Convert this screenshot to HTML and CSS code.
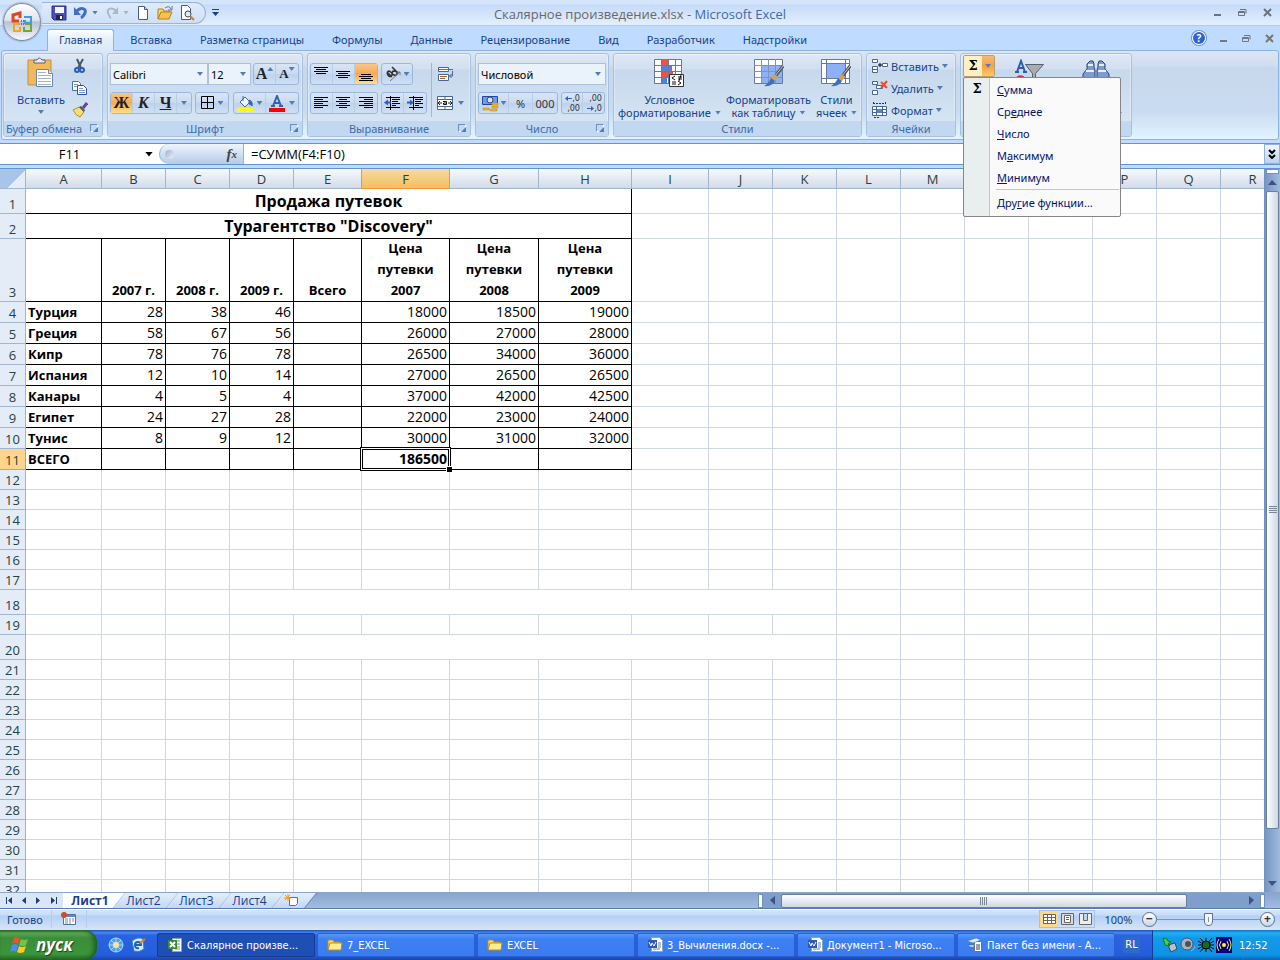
FILE: index.html
```html
<!DOCTYPE html>
<html lang="ru">
<head>
  <meta charset="UTF-8">
  <title>Скалярное произведение.xlsx - Microsoft Excel</title>
  <meta name="viewport" content="width=device-width, initial-scale=1.0">
  <link rel="stylesheet" href="styles.css">
</head>
<body>

  <button class="office" aria-label="Office">
    <svg width="24" height="24" viewBox="0 0 24 24" fill="none">
      <path d="M9 11H3V5l7-2v5" stroke="#e0481a" stroke-width="3"/>
      <path d="M14 7h7v6h-6v-3" stroke="#3f9bdb" stroke-width="2"/>
      <path d="M10 14H4v7h6v-4" stroke="#f3a51c" stroke-width="2"/>
      <path d="M15 14h6v7h-7v-4" stroke="#6fa832" stroke-width="2"/>
      <path d="M11 11h1M13 11h1M11 14h1M13 14h1" stroke="#c8581c" stroke-width="2"/>
    </svg>
  </button>

  <header class="titlebar">
    <div class="left">
      <div class="quick">
        <button aria-label="Сохранить"><svg width="16" height="16" viewBox="0 0 16 16"><path d="M1 1h14v14H3l-2-2z" fill="#4a4fc0" stroke="#2c2f8c"/><path d="M4 2h9v6H4z" fill="#f4f6ff"/><path d="M5 10h7v5H5z" fill="#22264f"/><path d="M9 11h2v3H9z" fill="#fff"/></svg></button>
        <button aria-label="Отменить"><svg width="16" height="16" viewBox="0 0 16 16"><path d="M4 6c3-4 10-3 8 2-1 2-2 4-4 5" fill="none" stroke="#3d6cc9" stroke-width="3"/><path d="M1 2v8h7z" fill="#3d6cc9"/></svg><i class="arr"></i></button>
        <button aria-label="Вернуть"><svg width="16" height="16" viewBox="0 0 16 16"><path d="M12 6C9 2 2 3 4 8c1 2 1 4 3 5" fill="none" stroke="#a9b8cc" stroke-width="2"/><path d="M14 2v7H8z" fill="#a9b8cc"/></svg><i class="arr grey"></i></button>
        <button aria-label="Создать"><svg width="16" height="16" viewBox="0 0 16 16"><path d="M3.500 1.500h6l3 3v10h-9z" fill="#fff" stroke="#4c5a74"/><path d="M9.500 1.500v3h3" fill="#d5deec" stroke="#4c5a74"/></svg></button>
        <button aria-label="Открыть"><svg width="16" height="16" viewBox="0 0 16 16"><path d="M1 14V4h5l1 2h6v3" fill="#f7d774" stroke="#b58016"/><path d="M1 14l3-7h11l-3 7z" fill="#fbc14c" stroke="#b58016"/><path d="M8 3q4-3 6 1m1-3v4h-4" fill="none" stroke="#5574a8"/></svg></button>
        <button aria-label="Просмотр"><svg width="16" height="16" viewBox="0 0 16 16"><path d="M2.500.5h6l3 3v11h-9z" fill="#fff" stroke="#4c5a74"/><circle cx="9" cy="9" r="3" fill="#d9ecfb" stroke="#446"/><path d="M11 11l4 4" stroke="#c98416" stroke-width="2"/></svg></button>
      </div>
      <button class="qmore" aria-label="Настройка панели"><i class="arr dark"></i></button>
    </div>
    <h1><span>Скалярное произведение.xlsx</span> - Microsoft Excel</h1>
    <div class="winbtns">
      <button aria-label="Свернуть"><svg width="9" height="9"><path d="M1 7h7" stroke="#69727f" stroke-width="2"/></svg></button>
      <button aria-label="Восстановить"><svg width="9" height="9" fill="none" stroke="#69727f"><path d="M2 1.500h6v4M.5 3.500h6v4h-6zM.5 4.500h6"/></svg></button>
      <button aria-label="Закрыть"><svg width="9" height="9"><path d="M1 1l7 7M8 1l-7 7" stroke="#69727f" stroke-width="2"/></svg></button>
    </div>
  </header>

  <nav class="tabs">
    <a href="#" class="on">Главная</a>
    <a href="#">Вставка</a>
    <a href="#">Разметка страницы</a>
    <a href="#">Формулы</a>
    <a href="#">Данные</a>
    <a href="#">Рецензирование</a>
    <a href="#">Вид</a>
    <a href="#">Разработчик</a>
    <a href="#">Надстройки</a>
    <div class="winbtns">
      <button class="help" aria-label="Справка">?</button>
      <button aria-label="Свернуть книгу"><svg width="9" height="9"><path d="M1 7h7" stroke="#777" stroke-width="2"/></svg></button>
      <button aria-label="Восстановить книгу"><svg width="9" height="9" fill="none" stroke="#777"><path d="M2 1.500h6v4M.5 3.500h6v4h-6zM.5 4.500h6"/></svg></button>
      <button aria-label="Закрыть книгу"><svg width="9" height="9"><path d="M1 1l7 7M8 1l-7 7" stroke="#777" stroke-width="2"/></svg></button>
    </div>
  </nav>

  <section class="ribbon">
    <div class="group clip">
      <div class="gbody">
        <button class="big">
          <svg width="30" height="31" viewBox="0 0 30 31"><path d="M2 3h23v25H2z" fill="#f0b95c" stroke="#c98f35"/><path d="M8 6V3h3q2-4 5 0h3v3z" fill="#e9edf3" stroke="#596375"/><path d="M10.500 12.500h12l4 4v13h-16z" fill="#fff" stroke="#6f85ad"/><path d="M22.500 12.500v4h4" fill="#dbe5f4" stroke="#6f85ad"/><path d="M12 15.500h8M12 18.500h13M12 21.500h13M12 24.500h13M12 27.500h13" stroke="#9db2d4"/></svg>
          Вставить<i class="arr"></i>
        </button>
        <div class="stack">
          <button aria-label="Вырезать"><svg width="16" height="16" viewBox="0 0 16 16" fill="none"><path d="M5 1l4 9M11 1L6 10" stroke="#4c5564" stroke-width="2"/><circle cx="5" cy="12" r="2" stroke="#2b5cb8" stroke-width="2"/><circle cx="10" cy="12" r="2" stroke="#2b5cb8" stroke-width="2"/></svg></button>
          <button aria-label="Копировать"><svg width="16" height="16" viewBox="0 0 16 16"><path d="M.5 1.500h6l2 2v7h-8z" fill="#fff" stroke="#4d70ad"/><path d="M2 4.500h4M2 6.500h4" stroke="#7d9bd0"/><path d="M5.500 5.500h6l3 3v6h-9z" fill="#fff" stroke="#2b55a2"/><path d="M7 8.500h4M7 10.500h6M7 12.500h6" stroke="#7d9bd0"/></svg></button>
          <button aria-label="Формат по образцу"><svg width="16" height="16" viewBox="0 0 16 16"><path d="M1 8l6-3 5 5-4 5q-4-1-7-7z" fill="#f5dd7c" stroke="#b58c26"/><path d="M7 5l2-1 4 4-1 2z" fill="#555a66"/><path d="M11 6l4-5" stroke="#60499b" stroke-width="3"/></svg></button>
        </div>
      </div>
      <footer>Буфер обмена<i class="launch"></i></footer>
    </div>

    <div class="group font">
      <div class="gbody rows">
        <div class="line">
          <label class="combo"><select aria-label="Шрифт"><option>Calibri</option></select></label>
          <label class="combo size"><select aria-label="Размер"><option>12</option></select></label>
          <div class="set push">
            <button class="serif">A<i class="arr up"></i></button>
            <button class="serif small">A<i class="arr"></i></button>
          </div>
        </div>
        <div class="line">
          <div class="set">
            <button class="serif on">Ж</button>
            <button class="serif it">К</button>
            <button class="serif un">Ч</button>
            <button class="drop" aria-label="Подчеркивание"><i class="arr"></i></button>
          </div>
          <div class="set">
            <button class="wide" aria-label="Границы"><svg width="14" height="14" fill="none" stroke="#000"><path d="M.5.5h12v12H.5zM6.500.5v12M.5 6.500h12"/></svg><i class="arr"></i></button>
          </div>
          <div class="set push">
            <button class="wide" aria-label="Цвет заливки"><svg width="17" height="17" viewBox="0 0 17 17"><path d="M3 7l5-5 5 5-5 5z" fill="#f2f6fb" stroke="#4d6a96"/><path d="M6 1v5M12 5q4 1 3 6-2-2-3-2z" stroke="#3268b5" fill="#3268b5"/><path d="M0 13h16v4H0z" fill="#ff0"/></svg><i class="arr"></i></button>
            <button class="wide" aria-label="Цвет текста"><svg width="17" height="17" viewBox="0 0 17 17"><path d="M4 11L8 1l4 10M5 8h6M2 11h4M10 11h4" fill="none" stroke="#3a5fa6" stroke-width="2"/><path d="M0 13h16v4H0z" fill="red"/></svg><i class="arr"></i></button>
          </div>
        </div>
      </div>
      <footer>Шрифт<i class="launch"></i></footer>
    </div>

    <div class="group align">
      <div class="gbody split">
        <div class="rows">
          <div class="line">
            <div class="set">
              <button aria-label="По верхнему краю"><svg width="15" height="15" stroke="#000"><path d="M0 .5h14M2 2.500h10M0 4.500h14M2 6.500h10"/></svg></button>
              <button aria-label="По середине"><svg width="15" height="15" stroke="#000"><path d="M0 4.500h14M2 6.500h10M0 8.500h14M2 10.500h10"/></svg></button>
              <button class="on" aria-label="По нижнему краю"><svg width="15" height="15" stroke="#000"><path d="M2 7.500h10M0 9.500h14M2 11.500h10M0 13.500h14"/></svg></button>
            </div>
            <div class="set">
              <button class="wide" aria-label="Ориентация"><svg width="17" height="16" viewBox="0 0 17 16" fill="none" stroke="#333" stroke-width="1.500"><path d="M2 6l5 5M4 5q-3 1-1 4t4 0q1-2-3-4zM7 1l6 6M8 5q-2 3 1 4t3-2q0-2-4-2z"/><path d="M5 15L15 6M12 6h3v3" stroke="#777" stroke-width="1"/></svg><i class="arr"></i></button>
            </div>
          </div>
          <div class="line">
            <div class="set">
              <button aria-label="По левому краю"><svg width="15" height="13" stroke="#000"><path d="M0 .5h14M0 2.500h9M0 4.500h14M0 6.500h9M0 8.500h14M0 10.500h9"/></svg></button>
              <button aria-label="По центру"><svg width="15" height="13" stroke="#000"><path d="M0 .5h14M3 2.500h8M0 4.500h14M3 6.500h8M0 8.500h14M3 10.500h8"/></svg></button>
              <button aria-label="По правому краю"><svg width="15" height="13" stroke="#000"><path d="M0 .5h14M5 2.500h9M0 4.500h14M5 6.500h9M0 8.500h14M5 10.500h9"/></svg></button>
            </div>
            <div class="set">
              <button aria-label="Уменьшить отступ"><svg width="17" height="15" stroke="#000"><path d="M2 1.500h14M8 3.500h8M8 5.500h6M8 7.500h8M8 9.500h4M2 11.500h14M6.500 0v14"/><path d="M0 6.500l4-3v2h3v2H4v2z" fill="#2f5fc4" stroke="none"/></svg></button>
              <button aria-label="Увеличить отступ"><svg width="17" height="15" stroke="#000"><path d="M2 1.500h14M8 3.500h8M8 5.500h6M8 7.500h8M8 9.500h4M2 11.500h14M6.500 0v14"/><path d="M7 6.500l-4-3v2H0v2h3v2z" fill="#2f5fc4" stroke="none"/></svg></button>
            </div>
          </div>
        </div>
        <div class="rows merge">
          <button aria-label="Перенос текста"><svg width="17" height="17" viewBox="0 0 17 17"><path d="M1.500 1.500h10v4h-10zM1.500 8.500h10v6h-10z" fill="#fff" stroke="#4a6696"/><path d="M1 3.500h15M3 10.500h7M3 12.500h5" stroke="#a0602c"/><path d="M15.500 5v5h-3m2-2l-2 2 2 2" fill="none" stroke="#51637f"/></svg></button>
          <button aria-label="Объединить"><svg width="17" height="15" viewBox="0 0 17 15"><path d="M.5.5h15v13H.5zM.5 3.500h15M.5 10.500h15M8 0v3M8 11v3" fill="#fff" stroke="#4a6696"/><path d="M1 7h4M11 7h4M3 5L1 7l2 2M13 5l2 2-2 2" fill="none" stroke="#222"/><path d="M6 5.500h3.500v3H6.500V7H9" fill="none" stroke="#111"/></svg><i class="arr"></i></button>
        </div>
      </div>
      <footer>Выравнивание<i class="launch"></i></footer>
    </div>

    <div class="group number">
      <div class="gbody rows">
        <div class="line">
          <label class="combo full"><select aria-label="Числовой формат"><option>Числовой</option></select></label>
        </div>
        <div class="line">
          <div class="set">
            <button class="wide" aria-label="Денежный формат"><svg width="18" height="17" viewBox="0 0 18 17"><path d="M1.500 1.500h15v8h-15z" fill="#6f9be0" stroke="#24479a"/><circle cx="9" cy="5" r="3" fill="#cfe0fa" stroke="#24479a"/><path d="M11 8h6v2h-6zM11 11h6v2h-6zM9 14h7v2H9zM2 13h6v2H2z" fill="#f5b92e" stroke="#b77c10" stroke-width=".5"/></svg><i class="arr"></i></button>
            <button>%</button>
            <button>000</button>
          </div>
          <div class="set">
            <button class="dec"><span><svg width="7" height="5"><path d="M0 2.500L3 0v2h4v1H3v2z" fill="#2f5fc4"/></svg>,0</span><span>,00</span></button>
            <button class="dec"><span>,00</span><span><svg width="7" height="5"><path d="M7 2.500L4 0v2H0v1h4v2z" fill="#2f5fc4"/></svg>,0</span></button>
          </div>
        </div>
      </div>
      <footer>Число<i class="launch"></i></footer>
    </div>

    <div class="group styles">
      <div class="gbody bigs">
        <button class="big">
          <svg width="30" height="30" viewBox="0 0 30 30"><path d="M.5 1.500h27v24H.5z" fill="#fff" stroke="#68799a"/><path d="M7 1h7v6H7zM7 13h12v6H7z" fill="#f0533c"/><path d="M7 7h11v6H7zM7 19h6v6H7z" fill="#4d83e8"/><path d="M.5 7.500h27M.5 13.500h27M.5 19.500h27M7.500 1v24M14.500 1v24M21.500 1v24" stroke="#68799a"/><path d="M15.500 16.500h14v12h-14z" fill="#fff" stroke="#333"/><path d="M21 18l-3 2 3 2M18 24h4M18 26h4M24 19h4M24 21h4M27 17l-2 6M24 23l3 2-3 2" fill="none" stroke="#111"/></svg>
          Условное<span>форматирование<i class="arr"></i></span>
        </button>
        <button class="big">
          <svg width="30" height="30" viewBox="0 0 30 30"><path d="M.5 1.500h28v24H.5z" fill="#fff" stroke="#68799a"/><path d="M8 7h20v18H8z" fill="#8db1f7"/><path d="M.5 7.500h28M.5 13.500h28M.5 19.500h28M7.500 1v24M14.500 1v24M21.500 1v24" stroke="#8093b5"/><path d="M29 8l-9 12" stroke="#4b4f58" stroke-width="3"/><path d="M29 8l-8 10" stroke="#c9ccd2"/><path d="M21 16l-4 4 4 3 3-4z" fill="#d6a34a"/><path d="M17 20l4 3q-3 6-11 5 5-3 7-8z" fill="#3e6fbe"/></svg>
          Форматировать<span>как таблицу<i class="arr"></i></span>
        </button>
        <button class="big">
          <svg width="30" height="30" viewBox="0 0 30 30"><path d="M.5 1.500h28v24H.5z" fill="#fff" stroke="#68799a"/><path d="M.5 5.500h28M.5 20.500h28M5.500 1v24M24.500 1v24" stroke="#68799a"/><path d="M6 6h18v14H6z" fill="#8db1f7"/><path d="M29 8l-9 12" stroke="#4b4f58" stroke-width="3"/><path d="M29 8l-8 10" stroke="#c9ccd2"/><path d="M21 16l-4 4 4 3 3-4z" fill="#d6a34a"/><path d="M17 20l4 3q-3 6-11 5 5-3 7-8z" fill="#3e6fbe"/></svg>
          Стили<span>ячеек<i class="arr"></i></span>
        </button>
      </div>
      <footer>Стили</footer>
    </div>

    <div class="group cells">
      <div class="gbody list">
        <button><svg width="16" height="16" viewBox="0 0 16 16"><path d="M.5 1.500h5v3h-5zM.5 8.500h5v6h-5zM.5 11.500h5M10.500 5.500h5v3h-5z" fill="#fff" stroke="#4a6696"/><path d="M6 7h4M8 5v4" stroke="#000"/></svg>Вставить<i class="arr"></i></button>
        <button><svg width="16" height="16" viewBox="0 0 16 16"><path d="M.5 1.500h5v3h-5zM.5 10.500h5v4h-5zM4.500 5.500h6v3h-6z" fill="#fff" stroke="#4a6696"/><path d="M9 2l6 6M15 1L9 8" stroke="#f04a28" stroke-width="2"/></svg>Удалить<i class="arr"></i></button>
        <button><svg width="16" height="16" viewBox="0 0 16 16"><path d="M.5 4.500h14v9H.5zM.5 7.500h14M.5 10.500h14M4.500 4v9M10.500 4v9" fill="#fff" stroke="#4a6696"/><path d="M5 7h5v4H5z" fill="#4d83e8"/><path d="M1 1.500h13M1.500 0v3M13.500 0v3M2 15.500h6" stroke="#333" stroke-dasharray="2 1"/></svg>Формат<i class="arr"></i></button>
      </div>
      <footer>Ячейки</footer>
    </div>

    <div class="group edit">
      <div class="gbody">
        <div class="sum"><button>Σ</button><button aria-label="Список функций"><i class="arr"></i></button></div>
        <svg class="sort" width="29" height="30" viewBox="0 0 29 30"><path d="M2 13L6 2l4 11M3 9h6M0 13h4M8 13h4" fill="none" stroke="#2f5bb0" stroke-width="2"/><path d="M10.500 5.500h18l-8 9v12h-3v-12z" fill="#a9adb3" stroke="#5a5e66"/><path d="M2 19q2-3 6-1v9" fill="none" stroke="#c33" stroke-width="2"/></svg>
        <svg class="find" width="28" height="28" viewBox="0 0 28 28"><path d="M8 2h3l1 3v3l1 3v12H1v-8l4-5V5zM17 2h3l3 3v5l4 5v8H15V11l1-3V5z" fill="#7f9cd0" stroke="#2c4678"/><path d="M6 6h5M17 6h5M4 12h8M16 12h8" stroke="#e8f0fc" stroke-width="2"/></svg>
        <i class="arr"></i>
      </div>
      <footer></footer>
      <div class="menu" role="menu">
        <button role="menuitem"><b>Σ</b><span><u>С</u>умма</span></button>
        <button role="menuitem"><span>Ср<u>е</u>днее</span></button>
        <button role="menuitem"><span><u>Ч</u>исло</span></button>
        <button role="menuitem"><span>М<u>а</u>ксимум</span></button>
        <button role="menuitem"><span><u>М</u>инимум</span></button>
        <button role="menuitem" class="more"><span>Дру<u>г</u>ие функции...</span></button>
      </div>
    </div>
  </section>

  <div class="formula">
    <div class="namebox"><input aria-label="Имя ячейки" value="F11"><i class="arr black"></i></div>
    <div class="fx"><i class="knob"></i><button aria-label="Вставить функцию"><em>f</em><sub>x</sub></button></div>
    <input class="expr" aria-label="Строка формул" value="=СУММ(F4:F10)">
    <button class="expand" aria-label="Развернуть"><svg width="9" height="10" fill="none" stroke="#000" stroke-width="2"><path d="M1 1l3 3 3-3M1 6l3 3 3-3"/></svg></button>
  </div>

  <main class="sheet">
    <div class="grid"><table id="grid"></table></div>
    <div class="vscroll">
      <i class="splitter"></i>
      <button aria-label="Вверх"><svg width="9" height="5"><path d="M0 5l4-5 5 5z" fill="#3d5378"/></svg></button>
      <div class="thumb"><svg width="8" height="8" stroke="#7a8799"><path d="M0 .5h8M0 2.500h8M0 4.500h8M0 6.500h8"/></svg></div>
      <button aria-label="Вниз"><svg width="9" height="5"><path d="M0 0h9L4 5z" fill="#3d5378"/></svg></button>
    </div>
  </main>

  <div class="bottom">
    <div class="nav">
      <button aria-label="Первый лист"><svg width="7" height="7"><path d="M0 0h1v7H0zM6 0v7L2 3.500z" fill="#1c3c7c"/></svg></button>
      <button aria-label="Предыдущий лист"><svg width="7" height="7"><path d="M5 0v7L1 3.500z" fill="#1c3c7c"/></svg></button>
      <button aria-label="Следующий лист"><svg width="7" height="7"><path d="M1 0v7l4-3.500z" fill="#1c3c7c"/></svg></button>
      <button aria-label="Последний лист"><svg width="7" height="7"><path d="M6 0h1v7H6zM1 0v7l4-3.500z" fill="#1c3c7c"/></svg></button>
    </div>
    <div class="sheets">
      <button class="on">Лист1</button>
      <button>Лист2</button>
      <button>Лист3</button>
      <button>Лист4</button>
      <button class="new" aria-label="Вставить лист"><svg width="16" height="13" viewBox="0 0 16 13"><path d="M5.500 3.500h8v6l-2 2h-6z" fill="#fff" stroke="#55709f"/><path d="M4 0v7M0 4h7M1 1l5 5M6 1L1 6" stroke="#e39a2d"/></svg></button>
    </div>
    <div class="hscroll">
      <i class="splitter"></i>
      <button aria-label="Влево"><svg width="5" height="9"><path d="M5 0v9L0 4z" fill="#3d5378"/></svg></button>
      <div class="thumb"><svg width="8" height="8" stroke="#7a8799"><path d="M.5 0v8M2.500 0v8M4.500 0v8M6.500 0v8"/></svg></div>
      <button aria-label="Вправо"><svg width="5" height="9"><path d="M0 0v9l5-5z" fill="#3d5378"/></svg></button>
      <i class="splitter"></i>
    </div>
  </div>

  <div class="status">
    <span>Готово</span>
    <button class="macro" aria-label="Запись макроса"><svg width="16" height="14" viewBox="0 0 16 14"><path d="M2.500 2.500h12v10h-12z" fill="#fff" stroke="#54709f"/><path d="M3 3h11v2H3z" fill="#5e86cf"/><path d="M4 7h3M8 7h2M11 7h2M4 9h3M8 9h2M11 9h2M4 11h3M8 11h2" stroke="#7288ab"/><circle cx="3" cy="3" r="3" fill="#d9482b"/></svg></button>
    <div class="views">
      <button class="on" aria-label="Обычный"><svg width="13" height="11" fill="#fff" stroke="#6c6550"><path d="M.5.5h12v9H.5zM.5 3.500h12M.5 6.500h12M4.500.5v9M8.500.5v9"/></svg></button>
      <button aria-label="Разметка"><svg width="13" height="12" fill="#ddd" stroke="#666"><path d="M.5.5h12v11H.5z"/><path d="M3.500 2.500h6v7h-6zM5 4.500h3M5 6.500h3" fill="#fff"/></svg></button>
      <button aria-label="Страничный"><svg width="13" height="12" fill="#eee" stroke="#666"><path d="M.5.5h12v11H.5zM4.500.5v7h4v-7"/></svg></button>
    </div>
    <span class="pct">100%</span>
    <button class="round" aria-label="Уменьшить">−</button>
    <input type="range" aria-label="Масштаб" min="0" max="100" value="50">
    <button class="round" aria-label="Увеличить">+</button>
  </div>

  <div class="taskbar">
    <button class="start"><svg width="20" height="18" viewBox="0 0 20 18"><path d="M4 2q3-2 6 0L8 8Q5 6 2 8z" fill="#e8532a"/><path d="M11 3q3 2 7 0l-2 6q-3 2-7 0z" fill="#7cc242"/><path d="M2 9q3-2 6 0l-2 7q-3-2-6 0z" fill="#4a8df0"/><path d="M9 10q3 2 7 0l-2 6q-4 2-7 0z" fill="#fbc829"/></svg>пуск</button>
    <div class="launchers">
      <a href="#" aria-label="Браузер"><svg width="16" height="16" viewBox="0 0 16 16"><circle cx="8" cy="8" r="7" fill="#4aa3ee" stroke="#9fd0fb"/><path d="M8 1v14M1 8h14M3 3l10 10M13 3L3 13" stroke="#fff" stroke-opacity=".5"/><circle cx="8" cy="8" r="3" fill="#ffe2a8"/></svg></a>
      <a href="#" aria-label="Почта"><svg width="16" height="16" viewBox="0 0 16 16"><path d="M1 4q6-5 11-2l1 10q-5 4-10 2z" fill="#d6eafc" stroke="#2b80cf"/><path d="M4 8h6q0-3-3-3T4 8q0 4 4 3" fill="none" stroke="#1a63b5" stroke-width="2"/><path d="M9 6l5-4" stroke="#e67a22" stroke-width="2"/></svg></a>
    </div>
    <div class="tasks">
      <button class="on"><svg width="16" height="16" viewBox="0 0 16 16"><path d="M5.500 1.500h9v13h-9z" fill="#fff" stroke="#8aa"/><path d="M8 4h5M8 7h5M8 10h5M8 12h5" stroke="#6aa564"/><path d="M1 3h9v9H1z" fill="#3a8a3c"/><path d="M3 5l5 5M8 5l-5 5" stroke="#fff" stroke-width="2"/></svg><span>Скалярное произве...</span></button>
      <button><svg width="16" height="16" viewBox="0 0 16 16"><path d="M1 13V3h5l1 2h6v3" fill="#f8da5c" stroke="#c08c14"/><path d="M1 13l2-7h12l-1 7z" fill="#ffec94" stroke="#c08c14"/></svg><span>7_EXCEL</span></button>
      <button><svg width="16" height="16" viewBox="0 0 16 16"><path d="M1 13V3h5l1 2h6v3" fill="#f8da5c" stroke="#c08c14"/><path d="M1 13l2-7h12l-1 7z" fill="#ffec94" stroke="#c08c14"/></svg><span>EXCEL</span></button>
      <button><svg width="16" height="16" viewBox="0 0 16 16"><path d="M4.500.5h8l3 3v11h-11z" fill="#fff" stroke="#8aa"/><path d="M6 12h7M11 6h3M11 8h3M11 10h3" stroke="#5b7fc4"/><path d="M1 3h9v8H1z" fill="#3059b0"/><path d="M2 5l2 4 1-3 2 3 2-4" fill="none" stroke="#fff"/></svg><span>3_Вычиления.docx -...</span></button>
      <button><svg width="16" height="16" viewBox="0 0 16 16"><path d="M4.500.5h8l3 3v11h-11z" fill="#fff" stroke="#8aa"/><path d="M6 12h7M11 6h3M11 8h3M11 10h3" stroke="#5b7fc4"/><path d="M1 3h9v8H1z" fill="#3059b0"/><path d="M2 5l2 4 1-3 2 3 2-4" fill="none" stroke="#fff"/></svg><span>Документ1 - Microso...</span></button>
      <button><svg width="16" height="16" viewBox="0 0 16 16"><path d="M7.500 4.500h7v10h-7z" fill="#fff" stroke="#678"/><path d="M9 8h4M9 10h4M9 12h4" stroke="#345"/><path d="M0 4l9-3 5 2-8 3zM1 8h6v2H3z" fill="#dcecff" stroke="#2b6aa8" stroke-width=".5"/></svg><span>Пакет без имени - А...</span></button>
    </div>
    <span class="lang">RL</span>
    <div class="tray">
      <svg width="16" height="16" viewBox="0 0 16 16"><path d="M6 8l7-2 2 6-6 3z" fill="#b9c3cf" stroke="#445"/><path d="M1 1l2 7 5 1-2-2 3-2-3-1-1-2z" fill="#3fd04b" stroke="#157a25"/></svg>
      <svg width="16" height="16" viewBox="0 0 16 16"><circle cx="7" cy="7" r="6" fill="#aab3bf" stroke="#4e5763"/><circle cx="8" cy="7" r="3" fill="#4b525c"/><path d="M11 14q4-2 4-5" fill="none" stroke="#8fa4ff"/></svg>
      <svg width="16" height="16" viewBox="0 0 16 16"><path d="M2 1l5 6M14 1L9 7M0 8h16M2 15l5-6M14 15L9 9M8 1v14M0 4l7 4M16 4L9 8M0 12l7-4M16 12L9 8" stroke="#111"/><circle cx="8" cy="8" r="4" fill="#136b1e" stroke="#000"/></svg>
      <svg width="16" height="16" viewBox="0 0 16 16"><path d="M0 0h16v16H0z" fill="#000080"/><circle cx="8" cy="8" r="2" fill="#ffef3e"/><path d="M5 4q-3 4 0 8M11 4q3 4 0 8M3 2q-4 6 0 12M13 2q4 6 0 12" fill="none" stroke="#ffef3e"/></svg>
      <time>12:52</time>
    </div>
  </div>

  <script src="grid.js"></script>
</body>
</html>
```

FILE: styles.css
```css
* {
  box-sizing: border-box;
}

html, body {
  margin: 0;
  height: 100%;
  overflow: hidden;
}

body {
  position: relative;
  display: flex;
  flex-direction: column;
  height: 100vh;
  background: #bfdbff;
  font: 11px/13px "Noto Sans", "Open Sans", sans-serif;
  color: #15428b;
}

button, input, select {
  margin: 0;
  padding: 0;
  border: 0;
  background: none;
  font: inherit;
  color: inherit;
}

button {
  display: flex;
  align-items: center;
  justify-content: center;
}

a {
  color: inherit;
  text-decoration: none;
}

svg {
  display: block;
  flex: none;
}

/* small drop-down triangle */
.arr {
  flex: none;
  width: 6px;
  height: 4px;
  background: #567db1;
  clip-path: polygon(0 0, 100% 0, 50% 100%);
}

.arr.grey { background: #a9b3c2; }
.arr.dark { width: 7px; height: 4px; background: #15428b; }
.arr.black { width: 8px; height: 5px; background: #000; }
.arr.up { clip-path: polygon(50% 0, 100% 100%, 0 100%); }

/* title */
.office {
  position: absolute;
  left: 3px;
  top: 3px;
  z-index: 3;
  width: 38px;
  height: 38px;
  border: 1px solid #7d8ba3;
  border-radius: 50%;
  background: linear-gradient(#fff, #dfe4ec 45%, #b9c2d1 50%, #f7f9fc);
  box-shadow: 0 0 2px #5d6f8f;
}

.titlebar {
  flex: none;
  display: grid;
  grid-template-columns: 1fr auto 1fr;
  align-items: center;
  height: 26px;
  background: linear-gradient(#d3e4fb 0, #d3e4fb 4px, #c5dbf9 5px, #e3effe);
  border-bottom: 1px solid #b0cdee;
}

.left {
  display: flex;
  align-items: center;
  padding-left: 42px;
}

.quick {
  display: flex;
  align-items: center;
  gap: 6px;
  height: 22px;
  padding: 0 10px 0 9px;
  border: 1px solid #98b4da;
  border-left: 0;
  border-radius: 0 11px 11px 0;
  background: linear-gradient(#dfebfb, #cfe0f7);
}

.quick button { gap: 3px; }

.qmore {
  margin-left: 6px;
  border-top: 1px solid #15428b;
  padding-top: 2px;
}

h1 {
  margin: 0;
  font-weight: 400;
  font-size: 13px;
  font-family: "Open Sans", sans-serif;
  line-height: 16px;
  padding-top: 3px;
  color: #3e6aaa;
}

h1 span { color: #696969; }

.winbtns {
  display: flex;
  justify-content: flex-end;
  align-items: center;
  gap: 16px;
  padding-right: 8px;
}

/* tabs */
.tabs {
  flex: none;
  display: flex;
  align-items: flex-end;
  gap: 4px;
  height: 24px;
  padding-left: 47px;
}

.tabs a {
  height: 21px;
  padding: 3px 11px 0;
  border: 1px solid transparent;
  border-bottom: 0;
}

.tabs a.on {
  position: relative;
  z-index: 2;
  height: 22px;
  margin-bottom: -1px;
  border-color: #8db2e3;
  border-radius: 3px 3px 0 0;
  background: linear-gradient(#fff, #e7f1fc 40%, #dbe8f7);
}

.tabs .winbtns {
  align-self: center;
  gap: 14px;
  margin-left: auto;
  padding-right: 6px;
}

.tabs .help {
  width: 12px;
  height: 12px;
  border-radius: 50%;
  background: #2e63d6;
  box-shadow: 0 0 0 1px #fff, 0 0 0 2px #6d94d8;
  color: #fff;
  font-weight: 700;
  font-size: 10px;
}

/* ribbon */
.ribbon {
  flex: none;
  display: flex;
  gap: 4px;
  height: 90px;
  margin: 0 1px 3px;
  padding: 2px 1px;
  border: 1px solid #8db2e3;
  border-radius: 3px;
  background: linear-gradient(#dbe6f4, #cfddf0 15px, #c7d8ed 16px, #c9dbf0 60px, #e3f4ff);
}

.group {
  position: relative;
  flex: none;
  display: flex;
  flex-direction: column;
  border: 1px solid #a6c1e0;
  border-radius: 3px;
  background: linear-gradient(#dee8f5, #d1dff0 15px, #c7d8ed 16px, #d8e8f5);
  box-shadow: inset 0 0 0 1px rgba(255, 255, 255, .35);
}

.group footer {
  flex: none;
  position: relative;
  height: 15px;
  background: #c1d8f0;
  color: #3e6aaa;
  text-align: center;
  line-height: 15px;
}

.launch {
  position: absolute;
  right: 4px;
  top: 3px;
  width: 8px;
  height: 8px;
  border: 1px solid #6d90bf;
  border-right-color: #fff;
  border-bottom-color: #fff;
}

.launch::after {
  content: "";
  position: absolute;
  left: 2px;
  top: 2px;
  width: 5px;
  height: 5px;
  background: #567db1;
  clip-path: polygon(100% 0, 100% 100%, 0 100%);
}

.gbody {
  flex: 1;
  display: flex;
  min-height: 0;
}

.clip { width: 100px; }
.font { width: 196px; }
.align { width: 164px; }
.number { width: 134px; }
.styles { width: 249px; }
.cells { width: 90px; }
.edit { width: 172px; }

.clip footer { padding-right: 18px; }

.big {
  flex-direction: column;
  justify-content: flex-start;
  line-height: 13px;
  padding-top: 4px;
}

.big svg { margin-bottom: 5px; }
.big > .arr { margin-top: 4px; }
.big span { display: flex; align-items: center; gap: 4px; }
.clip .big { width: 74px; padding-top: 3px; }

.stack {
  display: flex;
  flex-direction: column;
  gap: 6px;
  margin-top: 4px;
  margin-left: -6px;
}

.rows {
  display: flex;
  flex-direction: column;
  gap: 7px;
}

.gbody.rows, .split { padding: 9px 3px 0 2px; }

.line {
  display: flex;
  gap: 3px;
}

.push { margin-left: auto; }

.set {
  display: flex;
  height: 22px;
  border: 1px solid #9ab8df;
  border-radius: 3px;
  background: linear-gradient(#d8e5f5, #c9daf0 50%, #bdd2ec 51%, #cfe0f4);
}

.set button {
  width: 22px;
  border-right: 1px solid #b8cde8;
}

.set button:last-child { border-right: 0; }
.set button.wide { width: 32px; gap: 3px; }
.set button.drop { width: 14px; }
.set .on { background: linear-gradient(#f9c68b, #fba94b 50%, #ffdf8e); }

.serif {
  color: #222;
  font: 700 16px/20px "Liberation Serif", serif;
}

.serif.small { font-size: 13px; }
.serif .arr { align-self: flex-start; margin-top: 3px; }
.serif.it { font-style: italic; }
.serif.un { text-decoration: underline; }

.combo {
  position: relative;
  width: 98px;
  height: 22px;
  margin-right: -3px;
  border: 1px solid #abc1de;
  background: #eaf2fb;
  color: #000;
}

.combo.size { width: 43px; }
.combo.full { width: 128px; }

.combo select {
  appearance: none;
  width: 100%;
  height: 20px;
  padding-left: 2px;
}

.combo::after {
  content: "";
  position: absolute;
  right: 4px;
  top: 8px;
  width: 6px;
  height: 4px;
  background: #567db1;
  clip-path: polygon(0 0, 100% 0, 50% 100%);
  pointer-events: none;
}

.split { gap: 4px; }
.align .set button.wide { width: 30px; gap: 2px; }

.merge {
  padding-left: 5px;
  border-left: 1px solid #9ab8df;
  height: 54px;
}

.merge button { height: 22px; gap: 4px; justify-content: flex-start; }

.number .set { color: #333; }
.number .set button { width: 24px; }
.number .set button.wide { width: 30px; gap: 2px; }

.number .set .dec {
  flex-direction: column;
  align-items: flex-end;
  width: 21px;
  padding-right: 2px;
  font: 9px/10px "DejaVu Sans Condensed", sans-serif;
}

.dec span { display: flex; align-items: center; height: 10px; }

.bigs { gap: 5px; padding-left: 4px; }

.list {
  flex-direction: column;
  align-items: flex-start;
  padding: 1px 0 0 5px;
}

.list button { height: 22px; gap: 3px; }

.edit .gbody { gap: 20px; padding: 1px 2px; }
.edit .gbody > .arr { margin: 57px 0 0 -14px; }
.sort, .find { margin-top: 4px; }
.find { margin-left: 18px; }

.sum {
  display: flex;
  width: 32px;
  height: 22px;
  border: 1px solid #b5a073;
  border-radius: 2px;
  background: #fdf1c4;
  color: #000;
}

.sum button { width: 19px; font: 700 13px/20px "DejaVu Serif", serif; }
.sum button + button { width: 12px; background: linear-gradient(#f6ba73, #fb9f3c 50%, #fdc96b); }

.menu {
  position: absolute;
  left: 2px;
  top: 23px;
  z-index: 10;
  display: flex;
  flex-direction: column;
  width: 158px;
  padding: 0 1px 2px;
  border: 1px solid #868686;
  border-radius: 2px;
  background: linear-gradient(90deg, #e9eeee 25px, #c5c5c5 25px, #c5c5c5 26px, #fafafa 26px);
  color: #00156e;
}

.menu button {
  justify-content: flex-start;
  height: 22px;
}

.menu span { margin-left: auto; width: 122px; text-align: left; }
.menu b { width: 24px; color: #000; font: 700 13px/20px "DejaVu Serif", serif; }

.menu .more {
  height: 25px;
  margin-top: 1px;
  margin-left: 31px;
  border-top: 1px solid #c5c5c5;
}

/* formula bar */
.formula {
  flex: none;
  display: flex;
  height: 22px;
  margin-bottom: 3px;
  border-top: 1px solid #6593cf;
  border-bottom: 1px solid #6593cf;
  background: #fff;
  color: #000;
  font: 13px/20px "Open Sans", sans-serif;
}

.namebox {
  display: flex;
  align-items: center;
  width: 159px;
  padding-right: 6px;
}

.namebox input { flex: 1; min-width: 0; padding-right: 6px; text-align: center; }

.fx {
  display: flex;
  align-items: center;
  justify-content: space-between;
  width: 85px;
  padding: 0 6px 0 5px;
  border: 1px solid #8db2e3;
  border-width: 0 1px;
  border-radius: 10px 0 0 10px;
  background: linear-gradient(#eef4fb, #b5cbe8);
}

.knob {
  width: 9px;
  height: 9px;
  border-radius: 50%;
  background: linear-gradient(135deg, #9eafc6, #eef3f9);
}

.fx em { font: italic 700 15px/20px "Liberation Serif", serif; color: #444; }
.fx sub { font: italic 700 11px/12px "Liberation Serif", serif; color: #444; }

.expr { flex: 1; padding-left: 7px; }

.expand {
  width: 16px;
  border: 1px solid #8db2e3;
  background: linear-gradient(#f4f8fd, #bcd2ee);
}

/* sheet */
.sheet {
  flex: 1;
  display: flex;
  min-height: 0;
  border-top: 1px solid #6593cf;
  background: #fff;
}

.grid {
  flex: 1;
  min-width: 0;
  overflow: hidden;
}

table {
  table-layout: fixed;
  border-collapse: separate;
  border-spacing: 0;
  width: 0;
  font: 14px/20px "Open Sans", sans-serif;
  color: #000;
}

th, td {
  height: 20px;
  padding: 0 2px;
  border-right: 1px solid #d0d7e5;
  border-bottom: 1px solid #d0d7e5;
  white-space: nowrap;
}

th {
  padding: 0;
  border-color: #9eb6ce;
  background: #e4ecf7;
  color: #27413e;
  font-weight: 400;
  font-size: 13px;
  line-height: 18px;
}

thead th { background: linear-gradient(#f7fafd, #d3dbe9); }
tbody th { vertical-align: bottom; }

.corner { background: linear-gradient(135deg, #a9c4e9 60%, #e4ecf7 60%); }

thead th.cur {
  background: linear-gradient(#f9d99f, #f1c15f);
  border-color: #f29536;
  box-shadow: -1px 0 #f29536;
}

tbody th.cur { background: #ffd58d; border-color: #f29536; }

.data { border-color: #000; }
.bold { font-weight: 700; font-size: 13px; }
.num { text-align: right; font-size: 14px; }
.mid { text-align: center; vertical-align: bottom; line-height: 21px; white-space: normal; }
.mid div { margin-top: -1px; }
.title { text-align: center; font-weight: 700; font-size: 16px; line-height: 24px; }

.sel {
  position: relative;
}

/* selection frame: black, white, black */
.sel::before {
  content: "";
  position: absolute;
  inset: -2px;
  border: 1px solid #000;
  box-shadow: inset 0 0 0 1px #fff, inset 0 0 0 2px #000;
}

.sel::after {
  content: "";
  position: absolute;
  right: -3px;
  bottom: -3px;
  width: 5px;
  height: 5px;
  background: #000;
  border: 1px solid #fff;
  border-width: 1px 0 0 1px;
}

.vscroll {
  display: flex;
  flex-direction: column;
  align-items: center;
  width: 16px;
  border-left: 1px solid #6f93c0;
  background: linear-gradient(90deg, #7695c2, #a0bbe0);
}

.vscroll button { width: 15px; height: 17px; }

.vscroll .splitter {
  width: 13px;
  height: 5px;
  border: 1px solid #6f93c0;
  background: #fff;
}

.thumb {
  display: flex;
  align-items: center;
  justify-content: center;
  border: 1px solid #6a7f9f;
  border-radius: 2px;
}

.vscroll .thumb {
  flex: 1;
  width: 13px;
  margin-bottom: 46px;
  background: linear-gradient(90deg, #fdfefe, #cfd7e2);
}

/* sheet tabs */
.bottom {
  flex: none;
  display: flex;
  height: 17px;
  border-top: 1px solid #8aa6cd;
  border-bottom: 1px solid #567db1;
  background: linear-gradient(#88a5cf, #a3bcdf);
}

.nav {
  display: flex;
  justify-content: space-between;
  width: 63px;
  padding: 0 6px;
  background: #d8e6f8;
}

.sheets { display: flex; }

.sheets button {
  position: relative;
  isolation: isolate;
  width: 53px;
  height: 15px;
  font: 12px/15px "Open Sans", sans-serif;
}

/* slanted tab: edge colour below, fill above */
.sheets button::before,
.sheets button::after {
  content: "";
  position: absolute;
  inset: 0 -9px 0 -4px;
  z-index: -1;
  background: #6285b8;
  clip-path: polygon(12px 0, 100% 0, calc(100% - 12px) 100%, 0 100%);
}

.sheets button::after {
  right: -8px;
  background: linear-gradient(#e4eefb, #c3d8f3);
}

.sheets .on { width: 54px; font-weight: 700; }
.sheets .on::before, .sheets .on::after { left: 0; clip-path: polygon(0 0, 100% 0, calc(100% - 12px) 100%, 0 100%); }
.sheets .on::after { background: #fff; }
.sheets .new { width: 32px; }

.hscroll {
  display: flex;
  align-items: center;
  width: 507px;
  margin-left: auto;
  margin-right: 15px;
  background: #7f9ecb;
}

.hscroll .splitter { width: 5px; height: 14px; border: 1px solid #6f93c0; background: #fff; }
.hscroll button { width: 18px; height: 15px; }

.hscroll .thumb {
  flex: 1;
  height: 14px;
  margin-right: 55px;
  background: linear-gradient(#fdfefe, #cfd7e2);
}

/* status bar */
.status {
  flex: none;
  display: flex;
  align-items: center;
  height: 21px;
  padding: 0 5px 2px 7px;
  border-top: 1px solid #fff;
  background: linear-gradient(#d7e6f9, #c7dcf8 5px, #b3d0f5 6px, #d7e5f7);
}

.macro { margin-left: 8px; padding: 0 9px; height: 18px; border: 1px solid #b5cde9; border-width: 0 1px; }

.views {
  display: flex;
  margin-left: auto;
  border: 1px solid #a9c1de;
}

.views button { width: 18px; height: 16px; }
.views .on { background: #ffd98b; }
.pct { width: 43px; text-align: center; margin: 0 2px; }

.round {
  width: 15px;
  height: 15px;
  border: 1px solid #566f92;
  border-radius: 50%;
  background: linear-gradient(#fff, #c9d6e8);
  color: #333;
  font-weight: 700;
  font-size: 12px;
  line-height: 12px;
}

.status input {
  appearance: none;
  width: 103px;
  height: 14px;
  background: linear-gradient(#7c95b8, #7c95b8) center / 100% 1px no-repeat;
}

.status input::-webkit-slider-thumb {
  appearance: none;
  width: 9px;
  height: 13px;
  border: 1px solid #5a7396;
  border-radius: 1px 1px 5px 5px;
  background: linear-gradient(#7d93b3, #7d93b3) center / 1px 5px no-repeat #f2f6fb;
}

/* taskbar */
.taskbar {
  flex: none;
  display: flex;
  align-items: center;
  height: 30px;
  background: linear-gradient(#1f4fb8, #4a8df5 3px, #2a62e0 5px, #245edb 25px, #1c44a8);
  color: #fff;
  font: 11px/13px "DejaVu Sans Condensed", "DejaVu Sans", sans-serif;
}

.start {
  width: 97px;
  height: 30px;
  gap: 6px;
  padding-right: 14px;
  border-radius: 0 12px 12px 0;
  background: linear-gradient(#2b6f2b, #5eac56 3px, #3c8c3c 8px, #3a963a 24px, #2a6a2a);
  box-shadow: inset -3px 0 5px #1d5c1d;
  font: italic 700 17px/20px "Open Sans", sans-serif;
  text-shadow: 1px 1px 1px #1b3f1b;
}

.launchers {
  display: flex;
  gap: 7px;
  width: 60px;
  padding-left: 11px;
}

.tasks {
  flex: 1;
  display: flex;
  gap: 2px;
  min-width: 0;
}

.tasks button {
  flex: 0 1 158px;
  justify-content: flex-start;
  gap: 4px;
  height: 24px;
  padding-left: 9px;
  border: 1px solid #2a5fd0;
  border-radius: 2px;
  background: linear-gradient(#5a98f8, #3c80f3 5px, #3a7cf0);
}

.tasks .on {
  background: #1e4fb5;
  border-color: #163b8c;
}

.tasks span { white-space: nowrap; }

.lang {
  width: 17px;
  margin-right: 12px;
  background: #316ac5;
  line-height: 16px;
  text-align: center;
}

.tray {
  display: flex;
  align-items: center;
  gap: 2px;
  width: 128px;
  height: 30px;
  padding-left: 9px;
  border-left: 1px solid #0e3f9e;
  background: linear-gradient(#1470c8, #1fb0f5 3px, #129ae8 8px, #0f93e5 25px, #0d62b8);
}

.tray time { margin-left: 5px; }
```

FILE: grid.js
```js
const cols = 'ABCDEFGHIJKLMNOPQR'.split('');
const widths = [76, 64, 64, 64, 68, 88, 89, 93, 77, 64, 64, 64, 64, 64, 64, 64, 64, 64];
const heights = { 1: 25, 2: 25, 3: 63, 18: 25, 20: 25 };

const header = ['', '2007 г.', '2008 г.', '2009 г.', 'Всего', 'Цена путевки 2007', 'Цена путевки 2008', 'Цена путевки 2009'];
const sales = [
  ['Турция', 28, 38, 46, '', 18000, 18500, 19000],
  ['Греция', 58, 67, 56, '', 26000, 27000, 28000],
  ['Кипр', 78, 76, 78, '', 26500, 34000, 36000],
  ['Испания', 12, 10, 14, '', 27000, 26500, 26500],
  ['Канары', 4, 5, 4, '', 37000, 42000, 42500],
  ['Египет', 24, 27, 28, '', 22000, 23000, 24000],
  ['Тунис', 8, 9, 12, '', 30000, 31000, 32000],
  ['ВСЕГО', '', '', '', '', 186500, '', '']
];

function blanks(n) {
  return '<td></td>'.repeat(n);
}

function cells(row) {
  if (row === 1) return '<td class="data title" colspan="8">Продажа путевок</td>' + blanks(10);
  if (row === 2) return '<td class="data title" colspan="8">Турагентство "Discovery"</td>' + blanks(10);
  if (row === 3) return header.map(t => `<td class="data bold mid"><div>${t}</div></td>`).join('') + blanks(10);
  if (row <= 11) {
    return sales[row - 4].map((v, i) => {
      let cls = 'data';
      if (i === 0) cls += ' bold';
      else cls += ' num';
      if (row === 11 && i === 5) cls += ' bold sel';
      return `<td class="${cls}">${v}</td>`;
    }).join('') + blanks(10);
  }
  // D:K are merged in these rows
  if (row === 18 || row === 20) return blanks(3) + '<td colspan="8"></td>' + blanks(7);
  return blanks(18);
}

let html = '<colgroup><col style="width:26px">' + widths.map(w => `<col style="width:${w}px">`).join('') + '</colgroup>';
html += '<thead><tr><th class="corner"></th>' + cols.map(c => `<th${c === 'F' ? ' class="cur"' : ''}>${c}</th>`).join('') + '</tr></thead><tbody>';

for (let r = 1; r <= 32; r++) {
  html += `<tr style="height:${heights[r] || (r < 12 ? 21 : 20)}px"><th${r === 11 ? ' class="cur"' : ''}>${r}</th>${cells(r)}</tr>`;
}

document.getElementById('grid').innerHTML = html + '</tbody>';
```
